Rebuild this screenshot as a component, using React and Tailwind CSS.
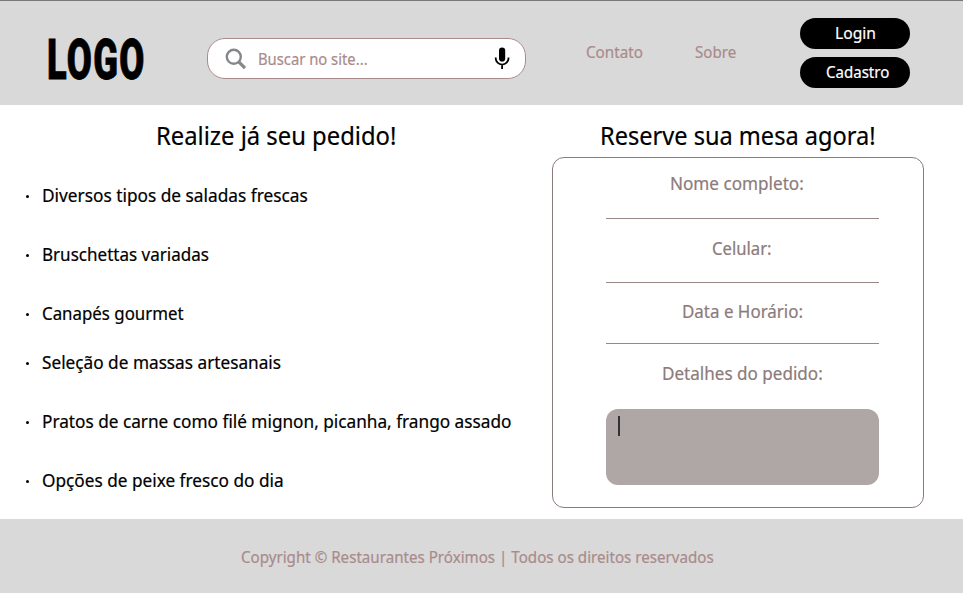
import { useLayoutEffect, useRef, useState } from "react";

// Single line of text that is condensed or widened to an exact width.
function FitText({ width, className = "", children }) {
  const inner = useRef(null);
  const [scale, setScale] = useState(1);
  useLayoutEffect(() => {
    setScale(width / inner.current.offsetWidth);
  }, [width]);
  return (
    <span className={`block shrink-0 whitespace-nowrap ${className}`} style={{ width }}>
      <span ref={inner} className="inline-block origin-left align-top" style={{ transform: `scaleX(${scale})` }}>
        {children}
      </span>
    </span>
  );
}

const dishes = [
  { text: "Diversos tipos de saladas frescas", width: 265.5, gap: "" },
  { text: "Bruschettas variadas", width: 167.5, gap: "mt-[35px]" },
  { text: "Canapés gourmet", width: 141.5, gap: "mt-[35px]" },
  { text: "Seleção de massas artesanais", width: 239, gap: "mt-[25px]" },
  { text: "Pratos de carne como filé mignon, picanha, frango assado", width: 469, gap: "mt-[35px]" },
  { text: "Opções de peixe fresco do dia", width: 242, gap: "mt-[35px]" },
];

function Header() {
  return (
    <header className="flex h-[104.5px] items-start border-t border-[#7b7777] bg-[#d9d9d9]">
      <FitText width={99} className="mt-[29px] ml-[47px] font-['Roboto',sans-serif] text-[55px] leading-[60px] font-black tracking-[2px] text-black [-webkit-text-stroke:0.8px_#000]">
        LOGO
      </FitText>
      <div className="mt-[36.5px] ml-[61px] flex h-[41px] w-[319px] shrink-0 items-center rounded-[18px] border border-[#a98b8b] bg-white">
        <svg className="mt-px ml-[17px] h-[22px] w-[22px]" viewBox="0 0 22 22" fill="none" stroke="#85888b">
          <circle cx="8.8" cy="8.8" r="7" strokeWidth="2.4" />
          <path d="M13.8 13.8 20 20.2" strokeWidth="3.2" />
        </svg>
        <FitText width={110} className="mt-px ml-[11px] text-[16px] leading-6 text-[#a98b8b]">
          Buscar no site...
        </FitText>
        <svg className="mt-px ml-[126px] h-[23px] w-[16px]" viewBox="0 0 16 23">
          <rect x="5" y="0.5" width="6.2" height="14" rx="3.1" fill="#000" />
          <path d="M1.7 10.5v.7a6.4 6.4 0 0 0 12.8 0v-.7M8.1 17.5V22" fill="none" stroke="#000" strokeWidth="1.8" />
        </svg>
      </div>
      <nav className="mt-[39px] ml-[59.5px] flex text-[16px] leading-6 text-[#a98b8b]">
        <FitText width={57}>Contato</FitText>
        <FitText width={41.5} className="ml-[52px]">Sobre</FitText>
      </nav>
      <div className="mt-[17px] ml-[64px] flex w-[109.5px] shrink-0 flex-col gap-2 text-[16px] text-white">
        <button className="flex h-[31px] items-start rounded-full bg-black pt-[3px] pl-[34.5px]">
          <FitText width={41} className="text-left leading-6">Login</FitText>
        </button>
        <button className="flex h-[31px] items-start rounded-full bg-black pt-[3px] pl-[26px]">
          <FitText width={63} className="text-left leading-6">Cadastro</FitText>
        </button>
      </div>
    </header>
  );
}

function Menu() {
  return (
    <section className="w-[552px] shrink-0">
      <FitText width={240} className="mt-[15.5px] ml-[155.5px] text-[24.5px] leading-8">
        Realize já seu pedido!
      </FitText>
      <ul className="mt-[31px] ml-[26px]">
        {dishes.map((dish) => (
          <li key={dish.text} className={`flex h-6 items-center ${dish.gap}`}>
            <span className="mt-[3px] h-[3px] w-[3px] rounded-full bg-black" />
            <FitText width={dish.width} className="ml-[12.5px] text-[17.5px] leading-6">
              {dish.text}
            </FitText>
          </li>
        ))}
      </ul>
    </section>
  );
}

function Reservation() {
  return (
    <section className="w-[371.5px] shrink-0">
      <FitText width={276} className="mt-[15.5px] ml-[47.5px] text-[24.5px] leading-8">
        Reserve sua mesa agora!
      </FitText>
      <form className="mt-[5px] flex h-[351px] flex-col items-center rounded-[12px] border border-[#8c7b7b] pl-[9px] text-[17.5px] leading-6 text-[#8c7b7b]">
        <FitText width={134} className="mt-[13px] mr-[10px]">Nome completo:</FitText>
        <div className="mt-[23px] h-px w-[272.5px] bg-[#988888]" />
        <FitText width={60} className="mt-[17px]">Celular:</FitText>
        <div className="mt-[22px] h-px w-[272.5px] bg-[#988888]" />
        <FitText width={121} className="mt-[16px]">Data e Horário:</FitText>
        <div className="mt-[20px] h-px w-[272.5px] bg-[#988888]" />
        <FitText width={161} className="mt-[17px] ml-px">Detalhes do pedido:</FitText>
        <div className="mt-[24px] h-[76px] w-[272.5px] rounded-[12px] bg-[#afa6a6] pt-[7px] pl-3">
          <div className="h-5 w-[1.5px] bg-[#333]" />
        </div>
      </form>
    </section>
  );
}

export default function App() {
  return (
    <div className="flex h-[593px] w-[963px] flex-col overflow-hidden bg-white font-['Noto_Sans','Open_Sans',sans-serif] font-normal text-black [-webkit-text-stroke:0.2px_currentColor]">
      <Header />
      <main className="flex h-[414.5px]">
        <Menu />
        <Reservation />
      </main>
      <footer className="flex h-[74px] justify-center bg-[#d9d9d9] pt-[26px] pr-[9px] text-[16px] leading-6 text-[#a98b8b]">
        <FitText width={473}>Copyright © Restaurantes Próximos | Todos os direitos reservados</FitText>
      </footer>
    </div>
  );
}
